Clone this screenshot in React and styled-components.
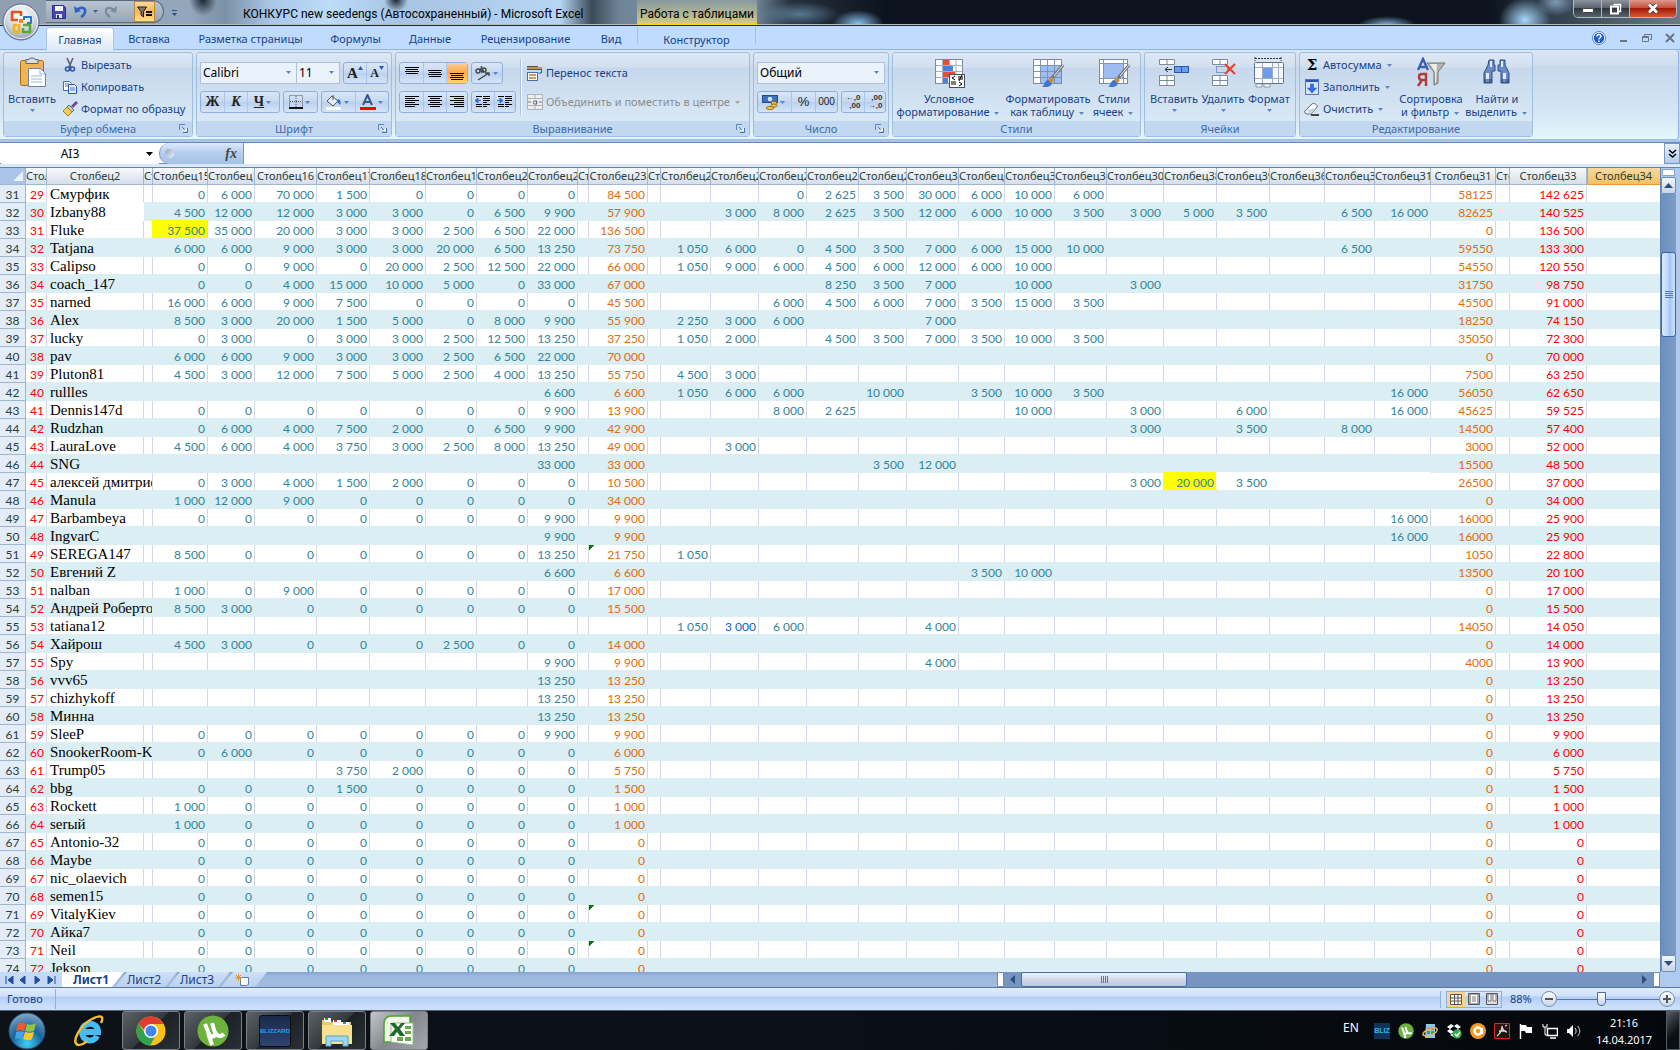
import React from "react";
import styled, { createGlobalStyle, css } from "styled-components";

const GlobalStyle = createGlobalStyle`
  * { box-sizing: border-box; }
  body { margin: 0; overflow: hidden; background: #0b0f14; }
  button, input, select { font: inherit; color: inherit; margin: 0; }
  button { padding: 0; border: 0; background: none; cursor: default; white-space: nowrap; }
  svg { display: block; flex: none; }
`;

// column widths, the last one takes what is left
const COLS = [
  26, 21, 97, 9, 55, 47, 62, 53, 56, 51, 51, 50, 11, 59, 13, 50, 48, 48, 52, 48,
  52, 46, 50, 52, 57, 53, 53, 55, 50, 56, 65, 14, 77,
];

const HEADERS = [
  "Столбец1", "Столбец2", "Столбец3", "Столбец15", "Столбец14", "Столбец16",
  "Столбец17", "Столбец18", "Столбец19", "Столбец20", "Столбец21", "Столбец22",
  "Столбец23", "Столбец24", "Столбец25", "Столбец26", "Столбец27", "Столбец28",
  "Столбец29", "Столбец30", "Столбец35", "Столбец36", "Столбец37", "Столбец30",
  "Столбец38", "Столбец39", "Столбец36", "Столбец32", "Столбец312", "Столбец31",
  "Столбец32", "Столбец33", "Столбец34",
];

const Z = [0, 0, 0, 0, 0, 0, 0, 0];
const last = (n) => ["", "", "", "", "", "", "", n];
const zeros = (n) => [0, 0, 0, 0, 0, 0, 0, n];

// name, first block, sum, second block by position, sum, total
const ROWS = [
  ["Смурфик", [0, 6000, 70000, 1500, 0, 0, 0, 0], 84500, { 3: 0, 4: 2625, 5: 3500, 6: 30000, 7: 6000, 8: 10000, 9: 6000 }, 58125, 142625],
  ["Izbany88", [4500, 12000, 12000, 3000, 3000, 0, 6500, 9900], 57900, { 2: 3000, 3: 8000, 4: 2625, 5: 3500, 6: 12000, 7: 6000, 8: 10000, 9: 3500, 10: 3000, 11: 5000, 12: 3500, 14: 6500, 15: 16000 }, 82625, 140525],
  ["Fluke", [37500, 35000, 20000, 3000, 3000, 2500, 6500, 22000], 136500, {}, 0, 136500],
  ["Tatjana", [6000, 6000, 9000, 3000, 3000, 20000, 6500, 13250], 73750, { 1: 1050, 2: 6000, 3: 0, 4: 4500, 5: 3500, 6: 7000, 7: 6000, 8: 15000, 9: 10000, 14: 6500 }, 59550, 133300],
  ["Calipso", [0, 0, 9000, 0, 20000, 2500, 12500, 22000], 66000, { 1: 1050, 2: 9000, 3: 6000, 4: 4500, 5: 6000, 6: 12000, 7: 6000, 8: 10000 }, 54550, 120550],
  ["coach_147", [0, 0, 4000, 15000, 10000, 5000, 0, 33000], 67000, { 4: 8250, 5: 3500, 6: 7000, 8: 10000, 10: 3000 }, 31750, 98750],
  ["narned", [16000, 6000, 9000, 7500, 0, 0, 0, 0], 45500, { 3: 6000, 4: 4500, 5: 6000, 6: 7000, 7: 3500, 8: 15000, 9: 3500 }, 45500, 91000],
  ["Alex", [8500, 3000, 20000, 1500, 5000, 0, 8000, 9900], 55900, { 1: 2250, 2: 3000, 3: 6000, 6: 7000 }, 18250, 74150],
  ["lucky", [0, 3000, 0, 3000, 3000, 2500, 12500, 13250], 37250, { 1: 1050, 2: 2000, 4: 4500, 5: 3500, 6: 7000, 7: 3500, 8: 10000, 9: 3500 }, 35050, 72300],
  ["pav", [6000, 6000, 9000, 3000, 3000, 2500, 6500, 22000], 70000, {}, 0, 70000],
  ["Pluton81", [4500, 3000, 12000, 7500, 5000, 2500, 4000, 13250], 55750, { 1: 4500, 2: 3000 }, 7500, 63250],
  ["rullles", last(6600), 6600, { 1: 1050, 2: 6000, 3: 6000, 5: 10000, 7: 3500, 8: 10000, 9: 3500, 15: 16000 }, 56050, 62650],
  ["Dennis147d", zeros(9900), 13900, { 3: 8000, 4: 2625, 8: 10000, 10: 3000, 12: 6000, 15: 16000 }, 45625, 59525],
  ["Rudzhan", [0, 6000, 4000, 7500, 2000, 0, 6500, 9900], 42900, { 10: 3000, 12: 3500, 14: 8000 }, 14500, 57400],
  ["LauraLove", [4500, 6000, 4000, 3750, 3000, 2500, 8000, 13250], 49000, { 2: 3000 }, 3000, 52000],
  ["SNG", last(33000), 33000, { 5: 3500, 6: 12000 }, 15500, 48500],
  ["алексей дмитриев", [0, 3000, 4000, 1500, 2000, 0, 0, 0], 10500, { 10: 3000, 11: 20000, 12: 3500 }, 26500, 37000],
  ["Manula", [1000, 12000, 9000, 0, 0, 0, 0, 0], 34000, {}, 0, 34000],
  ["Barbambeya", zeros(9900), 9900, { 15: 16000 }, 16000, 25900],
  ["IngvarC", last(9900), 9900, { 15: 16000 }, 16000, 25900],
  ["SEREGA147", [8500, 0, 0, 0, 0, 0, 0, 13250], 21750, { 1: 1050 }, 1050, 22800],
  ["Евгений Z", last(6600), 6600, { 7: 3500, 8: 10000 }, 13500, 20100],
  ["nalban", [1000, 0, 9000, 0, 0, 0, 0, 0], 17000, {}, 0, 17000],
  ["Андрей Робертович", [8500, 3000, 0, 0, 0, 0, 0, 0], 15500, {}, 0, 15500],
  ["tatiana12", last(""), "", { 1: 1050, 2: 3000, 3: 6000, 6: 4000 }, 14050, 14050],
  ["Хайрош", [4500, 3000, 0, 0, 0, 2500, 0, 0], 14000, {}, 0, 14000],
  ["Spy", last(9900), 9900, { 6: 4000 }, 4000, 13900],
  ["vvv65", last(13250), 13250, {}, 0, 13250],
  ["chizhykoff", last(13250), 13250, {}, 0, 13250],
  ["Минна", last(13250), 13250, {}, 0, 13250],
  ["SleeP", zeros(9900), 9900, {}, 0, 9900],
  ["SnookerRoom-Kiev", [0, 6000, 0, 0, 0, 0, 0, 0], 6000, {}, 0, 6000],
  ["Trump05", ["", "", "", 3750, 2000, 0, 0, 0], 5750, {}, 0, 5750],
  ["bbg", [0, 0, 0, 1500, 0, 0, 0, 0], 1500, {}, 0, 1500],
  ["Rockett", [1000, 0, 0, 0, 0, 0, 0, 0], 1000, {}, 0, 1000],
  ["serый", [1000, 0, 0, 0, 0, 0, 0, 0], 1000, {}, 0, 1000],
  ["Antonio-32", Z, 0, {}, 0, 0],
  ["Maybe", Z, 0, {}, 0, 0],
  ["nic_olaevich", Z, 0, {}, 0, 0],
  ["semen15", Z, 0, {}, 0, 0],
  ["VitalyKiev", Z, 0, {}, 0, 0],
  ["Айка7", Z, 0, {}, 0, 0],
  ["Neil", Z, 0, {}, 0, 0],
  ["Jekson", Z, 0, {}, 0, 0],
];

const LONG_NAMES = [47, 54, 62];
const FLAGGED = [51, 71, 73];

const fmt = (n) => (n === "" || n === undefined ? "" : String(n).replace(/\B(?=(\d{3})+$)/g, " "));

export default function App() {
  return (
    <Screen>
      <GlobalStyle />
      <TitleBar />
      <TabStrip />
      <Ribbon />
      <FormulaRow />
      <Sheet />
      <BottomBar />
      <StatusBar />
      <TaskBar />
    </Screen>
  );
}

/* ---------- title ---------- */

function TitleBar() {
  return (
    <Title>
      <OfficeButton aria-label="Office">
        <svg width="40" height="40" viewBox="0 0 40 40">
          <defs>
            <radialGradient id="orb" cx="50%" cy="30%" r="75%">
              <stop offset="0" stopColor="#ffffff" />
              <stop offset=".55" stopColor="#d3d9e2" />
              <stop offset="1" stopColor="#8391a6" />
            </radialGradient>
          </defs>
          <circle cx="20" cy="20" r="18" fill="url(#orb)" stroke="#5d6f8a" />
          <circle cx="20" cy="20" r="16.5" fill="none" stroke="#fff" opacity=".8" />
          <g fill="none" strokeWidth="2.6" strokeLinejoin="round">
            <path d="M17 18h-6v-8h9v4" stroke="#e8541d" />
            <path d="M23 18v-3h7v6h-4" stroke="#2a78c8" strokeWidth="2" />
            <path d="M18 22v8h-5v-7h3" stroke="#f5b312" />
            <path d="M22 23h7v7h-7v-4" stroke="#5ba83a" />
          </g>
          <rect x="18" y="17" width="4" height="4" fill="#f08a1c" />
        </svg>
      </OfficeButton>
      <QuickBar>
        <button aria-label="Сохранить">
          <svg width="14" height="14" viewBox="0 0 14 14"><path d="M.5.5h11l2 2v11H.5z" fill="#4747b5" stroke="#2c2c86" /><path d="M3 1h8v5H3z" fill="#f3f6ff" /><path d="M4 9h6v4H4z" fill="#dfe3f4" /><path d="M5 10h2v3H5z" fill="#333" /></svg>
        </button>
        <button aria-label="Отменить">
          <svg width="13" height="13" viewBox="0 0 13 13"><path d="M3 5c4-4 9-2 8 2-.4 2.400-2 4-4 5" fill="none" stroke="#2c62c9" strokeWidth="2.500" /><path d="M0 1l1 7 6-2z" fill="#2c62c9" /></svg>
        </button>
        <Caret $color="#3a5f9e" />
        <button aria-label="Вернуть">
          <svg width="13" height="13" viewBox="0 0 13 13"><path d="M10 5C6 1 1 3 2 7c.4 2.400 2 4 4 5" fill="none" stroke="#7d899a" strokeWidth="2" /><path d="M13 1l-1 7-6-2z" fill="#7d899a" /></svg>
        </button>
        <Caret $color="#c2b8a6" />
        <FilterButton aria-label="Фильтр">
          <svg width="16" height="14" viewBox="0 0 16 14"><path d="M.5 2h9L6.500 6.500V12L4 10V6.500z" fill="#777" stroke="#222" /><path d="M9 7h6M9 10h6" stroke="#111" strokeWidth="2" /></svg>
        </FilterButton>
      </QuickBar>
      <MoreButton aria-label="Настройка панели"><i /><Caret $color="#274e86" /></MoreButton>
      <Caption>КОНКУРС new seedengs (Автосохраненный) - Microsoft Excel</Caption>
      <ContextTitle>Работа с таблицами</ContextTitle>
      <WindowButtons>
        <button aria-label="Свернуть"><svg width="12" height="8" viewBox="0 0 12 8"><rect x=".5" y="3.500" width="11" height="4" rx="1" fill="#fff" stroke="#444" /></svg></button>
        <button aria-label="Развернуть"><svg width="13" height="12" viewBox="0 0 13 12"><path d="M4.500 1.500h7v7h-2" fill="none" stroke="#fff" strokeWidth="1.500" /><rect x="2" y="3.500" width="7" height="7" fill="none" stroke="#fff" strokeWidth="2" /></svg></button>
        <CloseButton aria-label="Закрыть"><svg width="12" height="11" viewBox="0 0 12 11"><path d="M2 1.500l8 8M10 1.500l-8 8" stroke="#444" strokeWidth="4" /><path d="M2 1.500l8 8M10 1.500l-8 8" stroke="#fff" strokeWidth="2.600" /></svg></CloseButton>
      </WindowButtons>
    </Title>
  );
}

function TabStrip() {
  return (
    <Tabs>
      <Tab $w={68} $active>Главная</Tab>
      <Tab $w={70}>Вставка</Tab>
      <Tab $w={133}>Разметка страницы</Tab>
      <Tab $w={77}>Формулы</Tab>
      <Tab $w={72}>Данные</Tab>
      <Tab $w={119}>Рецензирование</Tab>
      <Tab $w={52}>Вид</Tab>
      <Tab $w={119} $context>Конструктор</Tab>
      <TabTools>
        <button aria-label="Справка">
          <svg width="14" height="14" viewBox="0 0 14 14"><circle cx="7" cy="7" r="6.500" fill="#fff" stroke="#5b84c4" /><circle cx="7" cy="7" r="5.200" fill="#1e5fd0" /><path d="M5 5.500C5 3 9 3 9 5.300 9 6.800 7 6.800 7 8.500M7 9.500V11" stroke="#fff" strokeWidth="1.500" fill="none" /></svg>
        </button>
        <button aria-label="Свернуть окно"><svg width="10" height="10"><path d="M1 8h7" stroke="#6b7480" strokeWidth="2" /></svg></button>
        <button aria-label="Восстановить окно"><svg width="10" height="10"><path d="M2.500 3V1.500h7v5H8M.5 3.500h6v5h-6zM.5 4.500h6" stroke="#6b7480" fill="none" /></svg></button>
        <button aria-label="Закрыть окно"><svg width="10" height="10"><path d="M1 1l8 8M9 1l-8 8" stroke="#6b7480" strokeWidth="2" /></svg></button>
      </TabTools>
    </Tabs>
  );
}

/* ---------- ribbon ---------- */

function Group({ title, width, launcher, inset, children }) {
  return (
    <GroupBox $w={width}>
      <GroupBody $inset={inset}>{children}</GroupBody>
      <GroupLabel>
        <span>{title}</span>
        {launcher && (
          <button aria-label={title + ": параметры"}>
            <svg width="9" height="9" viewBox="0 0 9 9"><path d="M.5 6V.5H6" fill="none" stroke="#5f86b8" /><path d="M3 3l3 3M8.500 4v4.500H4" stroke="#456fa8" fill="none" /><path d="M4 7h4V4z" fill="#fff" /></svg>
          </button>
        )}
      </GroupLabel>
    </GroupBox>
  );
}

function Ribbon() {
  return (
    <RibbonBar>
      <Group title="Буфер обмена" width={190} launcher>
        <BigButton $w={56}>
          <PasteIcon />
          <span>Вставить</span>
          <Caret />
        </BigButton>
        <Stack>
          <SmallButton><svg width="16" height="16" viewBox="0 0 16 16"><path d="M5 1l4 9M11 1L7 10" stroke="#56616f" strokeWidth="1.600" /><circle cx="5.500" cy="12" r="2" fill="none" stroke="#2c55b0" strokeWidth="1.600" /><circle cx="10.500" cy="12" r="2" fill="none" stroke="#2c55b0" strokeWidth="1.600" /></svg>Вырезать</SmallButton>
          <SmallButton><svg width="16" height="16" viewBox="0 0 16 16"><path d="M1.500 2.500h6l2 2v7h-8z" fill="#fff" stroke="#4a6ea8" /><path d="M6.500 5.500h6l2 2v7h-8z" fill="#e8f0ff" stroke="#2c55b0" /><path d="M8 9h5M8 11h5M3 5h4M3 7h3" stroke="#4a7bd0" /></svg>Копировать</SmallButton>
          <SmallButton><svg width="16" height="16" viewBox="0 0 16 16"><path d="M15 1l-5 5" stroke="#6b4f9a" strokeWidth="3" /><path d="M7 4l5 5-2 2-5-5z" fill="#c9ccd2" stroke="#666" /><path d="M5 6l5 5-4 4-5-5z" fill="#f0cf55" stroke="#a67c1a" /></svg>Формат по образцу</SmallButton>
        </Stack>
      </Group>

      <Group title="Шрифт" width={196} launcher>
        <FontGrid>
          <Line>
            <Picker label="Шрифт" width={97} value="Calibri" />
            <Picker label="Размер" width={43} value="11" />
            <Segment $ml={3}>
              <ToolButton $w={22} aria-label="Увеличить размер"><Glyph $size={15}>A</Glyph><Tiny viewBox="0 0 5 4"><path d="M0 4l2.500-4L5 4z" fill="#2c55b0" /></Tiny></ToolButton>
              <ToolButton $w={21} aria-label="Уменьшить размер"><Glyph $size={12}>A</Glyph><Tiny viewBox="0 0 5 4"><path d="M0 0l2.500 4L5 0z" fill="#2c55b0" /></Tiny></ToolButton>
            </Segment>
          </Line>
          <Line>
            <Segment>
              <ToolButton $w={23}><Glyph $size={14}>Ж</Glyph></ToolButton>
              <ToolButton $w={23}><Glyph $size={14} $italic>К</Glyph></ToolButton>
              <ToolButton $w={32}><Glyph $size={14} $underline>Ч</Glyph><Caret /></ToolButton>
            </Segment>
            <Segment $ml={3}>
              <ToolButton $w={33} aria-label="Границы"><svg width="14" height="14" viewBox="0 0 14 14"><path d="M.5.5h13v12H.5zM7 1v12M1 6.500h12" fill="none" stroke="#555" strokeDasharray="1 1" /><path d="M0 13h14" stroke="#111" strokeWidth="2" /></svg><Caret /></ToolButton>
            </Segment>
            <Segment $ml={3}>
              <ToolButton $w={33} aria-label="Заливка"><svg width="16" height="16" viewBox="0 0 16 16"><path d="M6 2l6 5-5 5-6-5z" fill="#e8edf5" stroke="#555" /><path d="M7 6V1" stroke="#555" /><path d="M12 5c3 1 3 3 2 6-1-2-3-2-3-4z" fill="#2c6fd0" /><rect y="13" width="15" height="3" fill="#fff" /></svg><Caret /></ToolButton>
              <ToolButton $w={33} aria-label="Цвет текста"><svg width="16" height="16" viewBox="0 0 16 16"><path d="M3 11L7.500 1 12 11M5 8h5" stroke="#34578f" strokeWidth="2" fill="none" /><rect y="13" width="16" height="3" fill="#f00" /></svg><Caret /></ToolButton>
            </Segment>
          </Line>
        </FontGrid>
      </Group>

      <Group title="Выравнивание" width={355} launcher>
        <FontGrid>
          <Line>
            <Segment>
              <ToolButton $w={23} aria-label="По верхнему краю"><Bars y={2} /></ToolButton>
              <ToolButton $w={23} aria-label="По середине"><Bars y={5} /></ToolButton>
              <ToolButton $w={21} $on aria-label="По нижнему краю"><Bars y={8} /></ToolButton>
            </Segment>
            <Segment $ml={3}>
              <ToolButton $w={30} aria-label="Ориентация"><svg width="17" height="16" viewBox="0 0 17 16"><g fill="none" stroke="#444" strokeWidth="1.400"><circle cx="4" cy="6" r="2" /><path d="M6 3l2 5M7 1l3 6" /><circle cx="10" cy="5" r="2" /><path d="M4 15L15 8M11 8h4v3" /></g></svg><Caret /></ToolButton>
            </Segment>
          </Line>
          <Line>
            <Segment>
              <ToolButton $w={23} aria-label="Слева"><AlignBars side="start" /></ToolButton>
              <ToolButton $w={23} aria-label="По центру"><AlignBars side="middle" /></ToolButton>
              <ToolButton $w={21} aria-label="Справа"><AlignBars side="end" /></ToolButton>
            </Segment>
            <Segment $ml={3}>
              <ToolButton $w={22} aria-label="Уменьшить отступ"><Indent /></ToolButton>
              <ToolButton $w={21} aria-label="Увеличить отступ"><Indent right /></ToolButton>
            </Segment>
          </Line>
        </FontGrid>
        <Divider />
        <WrapColumn>
          <SmallButton><svg width="16" height="16" viewBox="0 0 16 16"><path d="M0 1.500h11M0 4.500h15" stroke="#555" /><path d="M0 3h15" stroke="#c27b2a" strokeWidth="1.500" /><path d="M14.500 4v4h-3" stroke="#2c55b0" fill="none" /><rect x=".5" y="7.500" width="10" height="8" fill="#fff" stroke="#4a6ea8" /><path d="M2 10h7M2 13h7" stroke="#c27b2a" strokeWidth="1.500" /></svg>Перенос текста</SmallButton>
          <SmallButton $off><svg width="16" height="16" viewBox="0 0 16 16"><path d="M.5.5h15v15H.5zM.5 4.500h15M.5 11.500h15M8 0v4M8 12v4" fill="#eee" stroke="#aab2bd" /><path d="M1 8h3M12 8h3" stroke="#777" /><circle cx="8" cy="8.500" r="1.700" fill="none" stroke="#666" /><path d="M9.700 6.500v4" stroke="#666" /></svg>Объединить и поместить в центре<Caret $color="#a9a39a" /></SmallButton>
        </WrapColumn>
      </Group>

      <Group title="Число" width={136} launcher>
        <FontGrid>
          <Line><Picker label="Формат числа" width={128} value="Общий" /></Line>
          <Line>
            <Segment>
              <ToolButton $w={33} aria-label="Финансовый формат"><svg width="16" height="16" viewBox="0 0 16 16"><rect x=".5" y="1.500" width="15" height="7" fill="#3e6fc0" stroke="#224a90" /><circle cx="8" cy="5" r="2.300" fill="#d7e4f8" /><ellipse cx="12" cy="9" rx="3" ry="1.500" fill="#f5cf52" stroke="#9c6e12" /><ellipse cx="12" cy="11.500" rx="3" ry="1.500" fill="#f5cf52" stroke="#9c6e12" /><ellipse cx="8" cy="14" rx="4" ry="1.500" fill="#f5cf52" stroke="#9c6e12" /></svg><Caret /></ToolButton>
              <ToolButton $w={24}><Figure $size={13}>%</Figure></ToolButton>
              <ToolButton $w={22}><Figure $size={10}>000</Figure></ToolButton>
            </Segment>
            <Segment $ml={3}>
              <ToolButton $w={22} aria-label="Увеличить разрядность"><Decimals top="←,0" bottom=",00" /></ToolButton>
              <ToolButton $w={21} aria-label="Уменьшить разрядность"><Decimals top=",00" bottom="→,0" /></ToolButton>
            </Segment>
          </Line>
        </FontGrid>
      </Group>

      <Group title="Стили" width={249}>
        <BigButton $w={112}><CondIcon /><span>Условное</span><span>форматирование <Caret /></span></BigButton>
        <BigButton $w={86}><TableIcon /><span>Форматировать</span><span>как таблицу <Caret /></span></BigButton>
        <BigButton $w={46}><TableIcon solid /><span>Стили</span><span>ячеек <Caret /></span></BigButton>
      </Group>

      <Group title="Ячейки" width={152} inset={2}>
        <BigButton $w={54}>
          <svg width="32" height="32" viewBox="0 0 32 32"><CellRows /><rect x="16.500" y="9.500" width="14" height="6" fill="#6f9be8" stroke="#2c55b0" /><path d="M23.500 10v6" stroke="#2c55b0" /><path d="M14 12.500H7M10 10l-3 2.500 3 2.500" stroke="#333" fill="none" /></svg>
          <span>Вставить</span><Caret />
        </BigButton>
        <BigButton $w={44}>
          <svg width="32" height="32" viewBox="0 0 32 32"><CellRows x={4} /><rect x="9.500" y="9.500" width="11" height="6" fill="none" stroke="#2c55b0" strokeDasharray="1 1" /><path d="M18 7l10 10M28 7L18 17" stroke="#ee3b24" strokeWidth="2" /></svg>
          <span>Удалить</span><Caret />
        </BigButton>
        <BigButton $w={48}>
          <svg width="32" height="32" viewBox="0 0 32 32"><path d="M2 1.500h26M2 0v4M28 0v4" stroke="#333" strokeDasharray="2 1" /><rect x="1.500" y="5.500" width="29" height="21" rx="1" fill="#f7f9fc" stroke="#5f7288" /><path d="M2 10.500h28M2 21.500h28M9.500 6v20M19.500 6v20M25.500 6v20" stroke="#9fb0c4" /><rect x="10" y="11" width="9" height="10" fill="#6f9be8" /><path d="M3 27h6v3H3zM11 27h6v3h-6z" fill="#fff" stroke="#8796a8" /></svg>
          <span>Формат</span><Caret />
        </BigButton>
      </Group>

      <Group title="Редактирование" width={234} inset={2}>
        <Stack $w={94}>
          <SmallButton><Sigma>Σ</Sigma>Автосумма<Caret /></SmallButton>
          <SmallButton><svg width="16" height="16" viewBox="0 0 16 16"><rect x="1.500" y=".5" width="13" height="15" fill="#d5e3fa" stroke="#5577ad" /><path d="M2 2h12" stroke="#2c55b0" strokeWidth="2" /><path d="M6.500 5h3v4h3L8 14 3.500 9h3z" fill="#2f6fe0" stroke="#1d4da8" strokeWidth=".5" /></svg>Заполнить<Caret /></SmallButton>
          <SmallButton><svg width="16" height="16" viewBox="0 0 16 16"><path d="M1 10l7-7c2-1.500 6 1 5 3l-6 7H3c-1.500 0-3-1.500-2-3z" fill="#fff" stroke="#56657a" /><path d="M2 9l5 4 5-6" fill="#c9d4e3" /><path d="M7 14h8" stroke="#111" strokeWidth="1.500" /></svg>Очистить<Caret /></SmallButton>
        </Stack>
        <BigButton $w={70}>
          <svg width="32" height="32" viewBox="0 0 32 32"><path d="M12 6h18l-7 9v11l-4 2V15z" fill="#b5b5b0" stroke="#73736e" /><path d="M15 7h7l-1 18-1 2V15z" fill="#ecebe6" /><g fill="none" strokeWidth="2.400"><path d="M3 13L8 2l5 11M5 10h6" stroke="#3a5fae" /><path d="M11 29V17H7c-4 0-4 6 0 6h4M7 23l-4 6" stroke="#b03a36" /></g></svg>
          <span>Сортировка</span><span>и фильтр <Caret /></span>
        </BigButton>
        <BigButton $w={62}>
          <svg width="32" height="32" viewBox="0 0 32 32"><g fill="#6b8cc8" stroke="#2e4a80"><path d="M8 3h5v5h1v6h-3v12H3V16l4-8z" /><path d="M19 3h5v5l4 8v10h-8V14h-3V8h2z" /></g><path d="M5 16h3v9H5zM22 16h3v9h-3zM9 4h2v6H9zM20 4h2v6h-2z" fill="#dfe9fa" /><path d="M3 22h8v4H3zM20 22h8v4h-8z" fill="#2e4a80" opacity=".6" /></svg>
          <span>Найти и</span><span>выделить <Caret /></span>
        </BigButton>
      </Group>
    </RibbonBar>
  );
}

function Caret({ $color = "#5a86c4" }) {
  return <CaretSvg viewBox="0 0 5 3"><path d="M0 0h5L2.500 3z" fill={$color} /></CaretSvg>;
}

function Picker({ label, width, value }) {
  return (
    <PickerBox $w={width}>
      <select aria-label={label} defaultValue={value}><option>{value}</option></select>
      <Caret />
    </PickerBox>
  );
}

function Bars({ y }) {
  return <svg width="16" height="16"><path d={`M1 ${y + 0.5}h14M2 ${y + 2.5}h12M1 ${y + 4.5}h14M2 ${y + 6.5}h12`} stroke="#000" /></svg>;
}

function AlignBars({ side }) {
  const x = { start: 1, middle: 3, end: 5 }[side];
  return <svg width="16" height="16"><path d={`M1 2.500h14M${x} 4.500h10M1 6.500h14M${x} 8.500h10M1 10.500h14M${x} 12.500h10`} stroke="#000" /></svg>;
}

function Indent({ right }) {
  return (
    <svg width="16" height="16">
      <path d="M1 2.500h6M8 2.500h7M8 4.500h7M8 6.500h7M8 8.500h4M1 10.500h6M8 10.500h7M1 12.500h6M8 12.500h4" stroke="#000" />
      <path d={right ? "M0 6.500h3M3 4l3 2.500L3 9z" : "M3 6.500h3M3 4L0 6.500 3 9z"} stroke="#2c6fd0" fill="#2c6fd0" />
    </svg>
  );
}

function Decimals({ top, bottom }) {
  return <DecimalBox><span>{top}</span><span>{bottom}</span></DecimalBox>;
}

function PasteIcon() {
  return (
    <svg width="32" height="32" viewBox="0 0 32 32">
      <rect x="4.500" y="3.500" width="23" height="25" rx="2" fill="#f0b54e" stroke="#a56b1c" />
      <path d="M10 2.500h3C13 .5 19 .5 19 2.500h3v4H10z" fill="#d8dce2" stroke="#5d6672" />
      <path d="M12.500 11.500h12l5 5v13h-17z" fill="#fff" stroke="#6d83a3" />
      <path d="M24 12v5h5M15 19h11M15 22h11M15 25h11" stroke="#9db4d4" fill="none" />
    </svg>
  );
}

function CondIcon() {
  return (
    <svg width="32" height="32" viewBox="0 0 32 32">
      <rect x="2.500" y="2.500" width="27" height="24" fill="#fff" stroke="#7b8ba0" />
      <path d="M3 8.500h26M3 14.500h26M3 20.500h26M9.500 3v23M16.500 3v23M23 3v23" stroke="#9fb0c4" />
      <path d="M10 3h6v5h-6zM10 15h12v5H10z" fill="#ee4b32" />
      <path d="M10 9h10v5H10zM10 21h5v5h-5z" fill="#4a7fe0" />
      <rect x="16.500" y="17.500" width="15" height="13" fill="#fff" stroke="#44505e" />
      <path d="M22 19l-3 2 3 2M18 25h5M18 27h5M25 20h5M25 22h5M29 18l-3 6M26 25l3 2-3 2" stroke="#000" fill="none" />
    </svg>
  );
}

function TableIcon({ solid }) {
  return (
    <svg width="32" height="32" viewBox="0 0 32 32">
      <rect x="1.500" y="2.500" width="28" height="24" fill="#fff" stroke="#7b8ba0" />
      <path d={solid ? "M6 7h19v14H6z" : "M9 9h20v17H9z"} fill="#9dbcf2" />
      <path d={solid ? "M2 6.500h27M2 21.500h27M5.500 3v23M25.500 3v23" : "M2 8.500h27M2 14.500h27M2 20.500h27M8.500 3v23M15.500 3v23M22.500 3v23"} stroke="#7f95b5" />
      <path d="M31 8L20 21" stroke="#777" strokeWidth="3" />
      <path d="M31 8l-9 11" stroke="#eee" />
      <path d="M18 20l4 3-3 4-4-2z" fill="#c98a35" />
      <path d="M16 23l4 4c-3 4-6 3-10 3 3-2 2-6 6-7z" fill="#3f74cf" />
    </svg>
  );
}

function CellRows({ x = 0 }) {
  return (
    <g fill="#fff" stroke="#7b8ba0">
      <path d={`M${x + 1.5} 2.500h15v5h-15zM${x + 9} 2.500v5`} />
      <path d={`M${x + 1.5} 18.500h15v10h-15zM${x + 9} 18.500v10M${x + 1.5} 23.500h15`} />
    </g>
  );
}

/* ---------- formula row and sheet ---------- */

function FormulaRow() {
  return (
    <FormulaBox>
      <NameBox aria-label="Имя" defaultValue="AI3" />
      <NameArrow aria-label="Список имён"><svg width="7" height="4"><path d="M0 0h7L3.500 4z" fill="#000" /></svg></NameArrow>
      <FxBox><i /><span>fx</span></FxBox>
      <FormulaInput aria-label="Строка формул" />
      <ExpandButton aria-label="Развернуть строку формул"><svg width="9" height="10"><path d="M1 1l3.500 3L8 1M1 5l3.500 3L8 5" fill="none" stroke="#000" strokeWidth="1.500" /></svg></ExpandButton>
    </FormulaBox>
  );
}

function cellProps(row, key) {
  if (row === 33 && key === "a0") return { $fill: "#ffff00" };
  if (row === 47 && key === "b11") return { $fill: "#ffff00", $bare: true };
  if (row === 47 && ["b12", "b13", "b14", "b15"].includes(key)) return { $fill: "#ffffff", $bare: true };
  if (row === 55 && key === "b2") return { $color: "#0066cc" };
  return {};
}

function Sheet() {
  return (
    <SheetArea>
      <GridClip>
        <Grid>
          <colgroup>
            {COLS.map((w, i) => <col key={i} width={w} />)}
            <col />
          </colgroup>
          <thead>
            <tr>
              <Corner><svg width="10" height="10"><path d="M10 0v10H0z" fill="#e8f0fa" /></svg></Corner>
              {HEADERS.map((h, i) => <ColHead key={i} $active={i === HEADERS.length - 1}>{h}</ColHead>)}
            </tr>
          </thead>
          <tbody>
            {ROWS.map(([name, first, sum, second, sum2, total], i) => {
              const n = i + 31;
              const long = LONG_NAMES.includes(n);
              return (
                <Row key={n} $band={i % 2 === 1}>
                  <RowHead $band={i % 2 === 1}>{n}</RowHead>
                  <Cell $color="#ff0000">{n - 2}</Cell>
                  <NameCell colSpan={long ? 2 : 1} $white={n === 32}>{name}</NameCell>
                  {!long && <Cell />}
                  {first.map((v, k) => <Cell key={k} {...cellProps(n, "a" + k)}>{fmt(v)}</Cell>)}
                  <Cell />
                  <Cell $color="#e46c0a" $flag={FLAGGED.includes(n)}>{fmt(sum)}</Cell>
                  <Cell />
                  {Array.from({ length: 15 }, (_, k) => (
                    <Cell key={k} {...cellProps(n, "b" + (k + 1))}>{fmt(second[k + 1])}</Cell>
                  ))}
                  <Cell $color="#e46c0a">{sum2}</Cell>
                  <Cell />
                  <Cell $color="#ff0000">{fmt(total)}</Cell>
                  <Cell $bare />
                </Row>
              );
            })}
          </tbody>
        </Grid>
      </GridClip>
      <VScroll>
        <Splitter />
        <ScrollButton aria-label="Вверх"><svg width="9" height="5"><path d="M0 5h9L4.500 0z" fill="#2d4f7f" /></svg></ScrollButton>
        <VTrack><VThumb><i /><i /><i /><i /></VThumb></VTrack>
        <ScrollButton aria-label="Вниз"><svg width="9" height="5"><path d="M0 0h9L4.500 5z" fill="#2d4f7f" /></svg></ScrollButton>
      </VScroll>
    </SheetArea>
  );
}

const navPaths = ["M1 0v8M8 0L3 4l5 4z", "M6 0L1 4l5 4z", "M2 0l5 4-5 4z", "M1 0l5 4-5 4zM8 0v8"];
const navNames = ["Первый лист", "Предыдущий лист", "Следующий лист", "Последний лист"];

function BottomBar() {
  return (
    <Bottom>
      <SheetNav>
        {navPaths.map((d, i) => (
          <button key={i} aria-label={navNames[i]}><svg width="9" height="8"><path d={d} fill="#1f4e98" stroke="#1f4e98" /></svg></button>
        ))}
      </SheetNav>
      <SheetTab $active><span>Лист1</span></SheetTab>
      <SheetTab><span>Лист2</span></SheetTab>
      <SheetTab><span>Лист3</span></SheetTab>
      <SheetTab aria-label="Вставить лист" $narrow>
        <svg width="14" height="12"><path d="M5.500 3.500h8v7l-2 1h-6z" fill="#fff" stroke="#5f7ba6" /><path d="M3.500 0v7M0 3.500h7M1 1l5 5M6 1L1 6" stroke="#e8962a" /></svg>
      </SheetTab>
      <Spacer />
      <HSplit />
      <HScroll>
        <button aria-label="Влево"><svg width="5" height="9"><path d="M5 0v9L0 4.500z" fill="#2d4f7f" /></svg></button>
        <HTrack><HThumb><i /><i /><i /><i /></HThumb></HTrack>
        <button aria-label="Вправо"><svg width="5" height="9"><path d="M0 0v9l5-4.500z" fill="#2d4f7f" /></svg></button>
      </HScroll>
      <HSplit />
      <BottomCorner />
    </Bottom>
  );
}

function StatusBar() {
  return (
    <Status>
      <Ready>Готово</Ready>
      <Spacer />
      <ViewButtons>
        <ViewButton $on aria-label="Обычный"><svg width="12" height="11"><path d="M.5.5h11v10H.5zM.5 4h11M.5 7h11M4.500 0v11M8 0v11" fill="#fff" stroke="#555" /></svg></ViewButton>
        <ViewButton aria-label="Разметка"><svg width="12" height="12"><path d="M.5.5h11v11H.5z" fill="#aaa" stroke="#555" /><path d="M3 2h6v8H3z" fill="#fff" /><path d="M4 4h4M4 6h4M4 8h4" stroke="#777" /></svg></ViewButton>
        <ViewButton aria-label="Страничный"><svg width="12" height="12"><path d="M.5.5h11v11H.5z" fill="#ddd" stroke="#555" /><path d="M2 1h3v7H2zM7 1h3v7H7z" fill="#fff" stroke="#777" /></svg></ViewButton>
      </ViewButtons>
      <Percent>88%</Percent>
      <ZoomButton aria-label="Уменьшить"><svg width="8" height="8"><path d="M0 4h8" stroke="#555" strokeWidth="2" /></svg></ZoomButton>
      <Zoom type="range" aria-label="Масштаб" min="0" max="100" defaultValue="43" />
      <ZoomButton aria-label="Увеличить"><svg width="8" height="8"><path d="M0 4h8M4 0v8" stroke="#555" strokeWidth="2" /></svg></ZoomButton>
    </Status>
  );
}

/* ---------- task bar ---------- */

function Mu({ size }) {
  return (
    <svg width={size} height={size} viewBox="0 0 32 32">
      <circle cx="16" cy="16" r="15.500" fill="#6cb33e" />
      <path d="M8 9l4 10c2 4 7 3 6-1l-3-10M18 17c2 5 6 5 9 2M11 18l4 12" stroke="#fff" strokeWidth="4" fill="none" />
    </svg>
  );
}

function TaskBar() {
  return (
    <Tasks>
      <StartButton aria-label="Пуск">
        <svg width="38" height="38" viewBox="0 0 38 38">
          <defs>
            <radialGradient id="start" cx="50%" cy="85%" r="85%">
              <stop offset="0" stopColor="#3fd0f8" />
              <stop offset=".5" stopColor="#1765a0" />
              <stop offset="1" stopColor="#86a9c4" />
            </radialGradient>
          </defs>
          <circle cx="19" cy="19" r="18" fill="url(#start)" stroke="#2a4a66" />
          <path d="M10 12c3-2 5-2 8 0l-2 7c-3-1-5-1-8 0z" fill="#f0592b" />
          <path d="M19 12c3 1 6 1 9-1l-2 8c-3 1-6 1-9 0z" fill="#8fc63e" />
          <path d="M8 20c3-1 5-1 8 0l-2 7c-3-1-5-1-7 0z" fill="#3fa4e8" />
          <path d="M17 20c3 1 6 1 9 0l-2 7c-3 2-6 1-9 0z" fill="#fbc926" />
        </svg>
      </StartButton>
      <TaskButton $plain aria-label="Internet Explorer">
        <svg width="32" height="32" viewBox="0 0 32 32">
          <path d="M9 17h16c0-11-16-11-16 0 0 10 12 11 15 4" fill="none" stroke="#46bdf2" strokeWidth="6" />
          <path d="M5 30C-3 28 8 9 19 4c10-5 12-2 9 4M5 30c4 0 7-2 9-4" fill="none" stroke="#f4c030" strokeWidth="2.400" />
        </svg>
      </TaskButton>
      <TaskButton aria-label="Chrome">
        <svg width="30" height="30" viewBox="0 0 30 30">
          <circle cx="15" cy="15" r="14.500" fill="#fbc116" />
          <path d="M2.500 7.500A14.500 14.500 0 0127.500 8H15l-6 7z" fill="#e33b2e" />
          <path d="M2.500 7.500A14.500 14.500 0 0014 29.500L20 19H10z" fill="#2fa24f" />
          <circle cx="15" cy="15" r="7" fill="#fff" /><circle cx="15" cy="15" r="5.500" fill="#4285f4" />
        </svg>
      </TaskButton>
      <TaskButton aria-label="uTorrent"><Mu size={32} /></TaskButton>
      <TaskButton aria-label="Battle.net"><Blizz>BLIZZARD</Blizz></TaskButton>
      <TaskButton aria-label="Проводник">
        <svg width="32" height="32" viewBox="0 0 32 32">
          <path d="M1 5h8l2 2h19v22H1z" fill="#ecca6a" /><path d="M3 3h7v4H3z" fill="#fff" /><path d="M4 3h3v2H4z" fill="#1b9e3a" /><path d="M12 5h8v5h-8z" fill="#fff" /><path d="M13 5h3v2h-3z" fill="#d33" /><path d="M20 7h8v4h-8z" fill="#fff" /><path d="M22 7h3v2h-3z" fill="#38c" />
          <path d="M1 10h30v19H1z" fill="#f7e08f" />
          <path d="M5 31V21h22v10h-5v-5H10v5z" fill="#9fd7f2" stroke="#5ba4cc" />
        </svg>
      </TaskButton>
      <TaskButton $on aria-label="Excel">
        <svg width="32" height="32" viewBox="0 0 32 32">
          <path d="M1 27V9c0-5 3-8 8-8h18v26z" fill="#eef7e8" stroke="#4ea32e" strokeWidth="1.500" />
          <path d="M8 8h22v22l-22-3z" fill="#fff" stroke="#9ab88d" />
          <path d="M7 8h5l3 4 3-4h4l-5 6 5 7h-5l-3-4-3 4H6l6-7z" fill="#1e6b2a" />
          <path d="M22 11h6v3h-6zM22 16h6v3h-6zM14 22h6v4h-6zM22 22h6v4h-6z" fill="#69a94c" />
        </svg>
      </TaskButton>
      <Spacer />
      <Lang>EN</Lang>
      <Tray>
        <MiniBlizz>BLIZ</MiniBlizz>
        <Mu size={16} />
        <svg width="16" height="16" viewBox="0 0 16 16"><path d="M4 1h9v14H3z" fill="#8cc8f0" /><path d="M5 5l3-1v3H5zM9 4h3v3H9z" fill="#f0702c" /><path d="M5 8h3v3H5zM9 8h3v3H9z" fill="#4c9e38" /><path d="M1 12C0 8 14 2 15 6s-9 9-14 6" fill="none" stroke="#e8b848" strokeWidth="1.500" /></svg>
        <svg width="16" height="16" viewBox="0 0 16 16"><path d="M5 1l3 2-4 3-3-2zM11 1L8 3l4 3 3-2zM1 8l3-2 4 3-3 2zM15 8l-3-2-4 3 3 2zM4 12l4-2 3 2-3 2z" fill="#fff" /><circle cx="11" cy="11" r="4.500" fill="#33b04a" /><path d="M9 11l2 2 3-4" stroke="#fff" fill="none" strokeWidth="1.500" /></svg>
        <svg width="16" height="16" viewBox="0 0 16 16"><circle cx="8" cy="8" r="8" fill="#f59a1f" /><circle cx="8" cy="8" r="3.500" fill="none" stroke="#fff" strokeWidth="2.400" /><path d="M12 5v6" stroke="#fff" strokeWidth="2" /></svg>
        <svg width="16" height="16" viewBox="0 0 16 16"><path d="M.5.5h15v15H.5z" fill="#2a1210" stroke="#d8281e" /><path d="M3 13c4-3 5-6 5-10M8 4c1 3 3 5 5 5M5 8h7M11 3l2-1" stroke="#ddd" fill="none" strokeWidth="1.300" /></svg>
        <svg width="16" height="16" viewBox="0 0 16 16"><path d="M2.500 1v15" stroke="#fff" strokeWidth="1.500" /><path d="M3 2h5l1 2h5v6H8L7 8H3z" fill="#fff" /></svg>
        <svg width="16" height="16" viewBox="0 0 16 16"><path d="M5.500 5.500h10v7h-10zM8 15h6" stroke="#fff" strokeWidth="1.500" fill="none" /><path d="M1 1v3h4V1M3 4v8h2" stroke="#fff" fill="none" /></svg>
        <svg width="16" height="16" viewBox="0 0 16 16"><path d="M1 6h2l4-4v12l-4-4H1z" fill="#fff" /><path d="M9 5c1.500 2 1.500 4 0 6M11.500 3c3 3 3 7 0 10" stroke="#ddd" fill="none" /></svg>
      </Tray>
      <Clock><span>21:16</span><span>14.04.2017</span></Clock>
      <ShowDesktop aria-label="Показать рабочий стол" />
    </Tasks>
  );
}

/* ---------- styles ---------- */

const Screen = styled.div`
  display: flex;
  flex-direction: column;
  height: 100vh;
  overflow: hidden;
  background: #bfdbff;
  font: 11px/14px "Noto Sans", "Open Sans", sans-serif;
  color: #15428b;
`;

const Spacer = styled.div`flex: 1;`;

const CaretSvg = styled.svg`
  display: inline-block;
  width: 5px;
  height: 3px;
  margin: 0 2px;
  vertical-align: middle;
`;

const Title = styled.header`
  position: relative;
  display: flex;
  flex: none;
  height: 26px;
  padding-left: 46px;
  border-bottom: 1px solid #1d2a38;
  box-shadow: inset 0 -1px 0 #b8bcc0;
  background:
    radial-gradient(14px 16px at 203px 0, #1c2733, transparent),
    radial-gradient(12px 12px at 396px 0, #1c2733, transparent),
    radial-gradient(26px 14px at 858px 24px, #8cc4f0, transparent),
    radial-gradient(40px 12px at 800px 14px, rgba(110, 150, 180, 0.7), transparent),
    radial-gradient(30px 10px at 1387px 26px, #8fc4f2, transparent),
    radial-gradient(26px 22px at 1525px 20px, #a8d8fb, transparent),
    radial-gradient(20px 14px at 1556px 2px, #7f9ab5, transparent),
    linear-gradient(90deg, #8f9fb0 0, #93a6bb 190px, #7b91a6 225px, #a9c6e6 270px, #bcdcf8 330px, #a7c4e2 400px, #b6d6f4 560px, #3c4a58 592px, #6f8699 620px, #7c93a8 750px, #26323f 790px, #0c131c 885px, #0c131c 1490px, #2b3947 1540px, #6d7a86 100%);
`;

const OfficeButton = styled.button`
  position: absolute;
  z-index: 2;
  left: 1px;
  top: 2px;
`;

const QuickBar = styled.div`
  display: flex;
  align-items: center;
  gap: 4px;
  width: 118px;
  height: 23px;
  padding-left: 6px;
  border: 1px solid #5c6b7c;
  border-left: 0;
  border-radius: 0 12px 12px 0;
  background: linear-gradient(#b9c5d2, #97a6b6);
  svg { flex: none; }
  button:first-child { margin-right: 4px; }
`;

const FilterButton = styled.button`
  display: flex;
  align-items: center;
  justify-content: center;
  width: 21px;
  height: 21px;
  border: 1px solid #b98a3c;
  background: linear-gradient(#fcd9a0, #f9b552 50%, #ffe08c);
`;

const MoreButton = styled.button`
  display: flex;
  flex-direction: column;
  align-items: center;
  justify-content: center;
  gap: 2px;
  width: 21px;
  i { width: 5px; height: 1px; background: #274e86; }
`;

const Caption = styled.h1`
  margin: 0 0 0 58px;
  width: 394px;
  font: 400 12px/28px Roboto, "Noto Sans", sans-serif;
  color: #000;
  white-space: nowrap;
`;

const ContextTitle = styled.div`
  width: 120px;
  font: 12px/28px Roboto, "Noto Sans", sans-serif;
  text-align: center;
  white-space: nowrap;
  color: #000;
  border-bottom: 2px solid #f5d800;
  background: linear-gradient(rgba(150, 165, 160, 0.5), #cdc98a);
`;

const WindowButtons = styled.div`
  display: flex;
  margin-left: auto;
  margin-right: 3px;
  height: 18px;
  border: 1px solid #aeb9c6;
  border-top: 0;
  border-radius: 0 0 5px 5px;
  overflow: hidden;
  button {
    display: flex;
    align-items: center;
    justify-content: center;
    width: 28px;
    border-right: 1px solid #aeb9c6;
    background: linear-gradient(#8d939b, #5a626c 45%, #2e353e 50%, #59626d);
  }
`;

const CloseButton = styled.button`
  && {
    width: 46px;
    border: 0;
    background: linear-gradient(#dd9a8d, #c4533c 45%, #a31a06 50%, #d65a34);
  }
`;

const Tabs = styled.nav`
  display: flex;
  flex: none;
  height: 24px;
  padding: 1px 5px 0 46px;
  background: #bfdbff;
  border-bottom: 1px solid #8db2e3;
`;

const Tab = styled.button`
  flex: none;
  width: ${(p) => p.$w}px;
  height: 24px;
  ${(p) => p.$active && css`
    border: 1px solid #a9c4e8;
    border-bottom: 0;
    border-radius: 4px 4px 0 0;
    background: linear-gradient(#fff, #dde8f5);
  `}
  ${(p) => p.$context && css`
    height: 17px;
    padding-top: 6px;
    border-left: 1px solid #a3bfe4;
    border-right: 1px solid #a3bfe4;
  `}
`;

const TabTools = styled.div`
  display: flex;
  align-items: center;
  gap: 13px;
  margin-left: auto;
`;

const RibbonBar = styled.section`
  display: flex;
  flex: none;
  gap: 3px;
  height: 90px;
  margin-right: 1px;
  padding: 2px 3px 3px;
  border-right: 1px solid #8db2e3;
  border-bottom: 1px solid #9ebbe0;
  border-radius: 0 4px 4px 0;
  background: linear-gradient(#dbe6f4, #cfdded 15px, #c9d9ed 16px, #d6e6f6 65px, #e6f7fb);
`;

const GroupBox = styled.div`
  display: flex;
  flex: none;
  flex-direction: column;
  width: ${(p) => p.$w}px;
  height: 85px;
  border: 1px solid #9ebfdb;
  border-radius: 3px;
  background: linear-gradient(#dee8f5, #d1dfef 14px, #c7d8ed 15px, #d8e8f5 68px);
`;

const GroupBody = styled.div`
  display: flex;
  height: 68px;
  padding-left: ${(p) => p.$inset || 0}px;
`;

const GroupLabel = styled.div`
  position: relative;
  height: 15px;
  line-height: 16px;
  text-align: center;
  color: #3e6aaa;
  background: #c1d8f0;
  button { position: absolute; right: 4px; top: 3px; }
`;

const BigButton = styled.button`
  display: flex;
  flex: none;
  flex-direction: column;
  align-items: center;
  width: ${(p) => p.$w}px;
  padding-top: 4px;
  line-height: 13px;
  > svg:first-child { margin-bottom: 3px; }
  > svg:last-child { margin-top: 4px; }
`;

const Stack = styled.div`
  display: flex;
  flex-direction: column;
  width: ${(p) => (p.$w ? p.$w + "px" : "auto")};
  padding: 1px 0 0 2px;
`;

const SmallButton = styled.button`
  display: flex;
  align-items: center;
  gap: 3px;
  height: 22px;
  color: ${(p) => (p.$off ? "#8d8d8d" : "inherit")};
`;

const Sigma = styled.b`
  width: 16px;
  font: 700 15px/16px "DejaVu Serif", serif;
  color: #000;
`;

const FontGrid = styled.div`
  display: flex;
  flex-direction: column;
  gap: 7px;
  padding: 9px 0 0 3px;
`;

const Line = styled.div`
  display: flex;
  height: 22px;
`;

const Segment = styled.div`
  display: flex;
  margin-left: ${(p) => p.$ml || 0}px;
  border: 1px solid #8fb0dd;
  border-radius: 3px;
  background: linear-gradient(#d9e6f6, #c4d8f1 50%, #b9d0ee 51%, #d5e5f8);
  button + button { border-left: 1px solid #adc6e8; }
`;

const ToolButton = styled.button`
  display: flex;
  align-items: center;
  justify-content: center;
  width: ${(p) => p.$w}px;
  ${(p) => p.$on && css`background: linear-gradient(#fbd19b, #fba94c 45%, #ffd66c);`}
`;

const Glyph = styled.span`
  font: 700 ${(p) => p.$size}px/16px "Liberation Serif", serif;
  font-style: ${(p) => (p.$italic ? "italic" : "normal")};
  text-decoration: ${(p) => (p.$underline ? "underline" : "none")};
  color: #222;
`;

const Tiny = styled.svg`
  width: 5px;
  height: 4px;
  margin-bottom: 10px;
`;

const Figure = styled.span`
  font: ${(p) => p.$size}px/14px "Liberation Sans", sans-serif;
  color: #222;
`;

const DecimalBox = styled.span`
  display: flex;
  flex-direction: column;
  font: 700 8px/8px "Liberation Sans", sans-serif;
  text-align: right;
  color: #333;
`;

const PickerBox = styled.div`
  position: relative;
  width: ${(p) => p.$w}px;
  height: 22px;
  border: 1px solid #abc1de;
  background: #eaf2fb;
  & + & { border-left: 0; }
  select {
    width: 100%;
    height: 20px;
    padding: 0 14px 0 2px;
    border: 0;
    outline: 0;
    appearance: none;
    background: transparent;
    font-size: 12px;
    color: #000;
  }
  svg { position: absolute; right: 3px; top: 8px; }
`;

const Divider = styled.div`
  width: 1px;
  margin: 6px 5px 6px 5px;
  background: #f5faff;
  box-shadow: -1px 0 0 #a9c2e0;
`;

const WrapColumn = styled.div`
  display: flex;
  flex-direction: column;
  gap: 7px;
  padding-top: 9px;
`;

const FormulaBox = styled.div`
  display: flex;
  flex: none;
  height: 28px;
  padding: 3px 0 4px 1px;
  background: linear-gradient(#a9c6ea 0, #a9c6ea 2px, #5f85b8 2px, #6a8dbd 3px, #fff 3px, #fff 23px, #6f8fb8 23px, #6f8fb8 24px, #d5e3f5 24px, #e3edf9 27px, #5f85b8 27px);
`;

const NameBox = styled.input`
  width: 138px;
  min-width: 0;
  border: 0;
  padding: 0;
  background: #fff;
  text-align: center;
  font-size: 12px;
  color: #000;
`;

const NameArrow = styled.button`
  width: 20px;
  padding-left: 7px;
  background: #fff;
`;

const FxBox = styled.div`
  display: flex;
  align-items: center;
  justify-content: space-between;
  width: 85px;
  padding: 0 6px 0 5px;
  border-left: 1px solid #7a98c0;
  border-right: 1px solid #7a98c0;
  border-radius: 10px 0 0 10px;
  background: linear-gradient(#dbe8f9, #b4cdee 50%, #a6c2e8);
  i { width: 9px; height: 9px; border-radius: 50%; background: linear-gradient(135deg, #8fa3bf, #eef3fa); }
  span { font: italic 700 14px/20px "Liberation Serif", serif; color: #444; }
`;

const FormulaInput = styled.input`
  flex: 1;
  min-width: 0;
  border: 0;
  padding: 0 4px;
  background: #fff;
`;

const ExpandButton = styled.button`
  display: flex;
  align-items: center;
  justify-content: center;
  width: 16px;
  border: 1px solid #7a98c0;
  background: linear-gradient(#e8f1fc, #b3cbea);
`;

const SheetArea = styled.main`
  display: flex;
  flex: 1;
  min-height: 0;
`;

const GridClip = styled.div`
  flex: 1;
  min-width: 0;
  overflow: hidden;
  background: #fff;
`;

const Grid = styled.table`
  width: 100%;
  table-layout: fixed;
  border-collapse: separate;
  border-spacing: 0;
  font: 12px/15px Lato, "Noto Sans", sans-serif;
  td, th { padding: 0; overflow: hidden; white-space: nowrap; font-weight: 400; }
  tbody td, tbody th { padding-top: 2px; }
`;

const Corner = styled.td`
  height: 17px;
  border-right: 1px solid #9eb6ce;
  border-bottom: 1px solid #9eb6ce;
  background: #a9c4e9;
  svg { margin-left: 13px; }
`;

const ColHead = styled.th`
  height: 17px;
  font: 11px/16px "Noto Sans", sans-serif;
  text-align: center;
  color: #27413e;
  border-right: 1px solid #9eb6ce;
  border-bottom: 1px solid #9eb6ce;
  background: linear-gradient(#f8fafc, #d6deea);
  ${(p) => p.$active && css`
    border-color: #f29536;
    border-right: 0;
    box-shadow: inset 1px 0 0 #f29536;
    background: linear-gradient(#f9d99f, #f1c15f);
  `}
`;

const Row = styled.tr`
  height: ${(p) => (p.$band ? 19 : 17)}px;
  background: ${(p) => (p.$band ? "#daeef3" : "#ffffff")};
  td { border-right: 1px solid ${(p) => (p.$band ? "transparent" : "#d0d7e5")}; }
`;

const RowHead = styled.th`
  text-align: center;
  color: #27413e;
  background: #e4ecf7;
  border-right: 1px solid #9eb6ce;
  ${(p) => p.$band && css`
    border-top: 1px solid #9eb6ce;
    border-bottom: 1px solid #9eb6ce;
  `}
`;

const Cell = styled.td`
  text-align: right;
  color: ${(p) => p.$color || "#31859b"};
  && { padding-right: 2px; }
  ${(p) => p.$bare && css`&&& { border-right-color: transparent; }`}
  ${(p) => p.$fill && css`
    background: ${p.$fill};
    box-shadow: -1px -1px 0 ${p.$fill};
  `}
  ${(p) => p.$flag && css`
    background: linear-gradient(135deg, #008000 4px, transparent 4px);
  `}
`;

const NameCell = styled.td`
  && { padding-left: 3px; }
  font: 15px/15px "Liberation Serif", serif;
  color: #000;
  ${(p) => p.$white && css`background: #fff;`}
`;

const VScroll = styled.div`
  display: flex;
  flex: none;
  flex-direction: column;
  width: 20px;
  padding-right: 4px;
  background: #b0caee;
  border-left: 1px solid #5f85b8;
`;

const Splitter = styled.div`
  height: 7px;
  margin: 1px;
  border: 1px solid #8aa6cc;
  background: #fff;
`;

const ScrollButton = styled.button`
  display: flex;
  align-items: center;
  justify-content: center;
  height: 17px;
  border: 1px solid #6f8fb8;
  border-radius: 2px;
  background: linear-gradient(#f2f6fb, #c7d5e8);
`;

const VTrack = styled.div`
  flex: 1;
  padding-top: 58px;
  background: linear-gradient(90deg, #6d8fbc, #7d9cc8);
`;

const VThumb = styled.div`
  display: flex;
  flex-direction: column;
  align-items: center;
  justify-content: center;
  gap: 1px;
  height: 85px;
  border: 1px solid #3a66a8;
  border-radius: 3px;
  background: linear-gradient(90deg, #dceafc, #b9d4fa 50%, #9fc3f5 55%, #cfe2fd);
  i { width: 8px; height: 1px; background: #5f7ba6; }
`;

const Bottom = styled.div`
  display: flex;
  flex: none;
  height: 16px;
  border-bottom: 1px solid #5577a5;
  background: linear-gradient(#86a3cf, #9db8de 4px, #a3bce0);
`;

const SheetNav = styled.div`
  display: flex;
  align-items: center;
  gap: 5px;
  width: 62px;
  padding-left: 5px;
  background: #c3d9f5;
`;

const SheetTab = styled.button`
  display: flex;
  align-items: center;
  justify-content: center;
  width: ${(p) => (p.$narrow ? 46 : 62)}px;
  height: 15px;
  margin-right: -9px;
  padding-right: 4px;
  font-size: 12px;
  font-weight: ${(p) => (p.$active ? 700 : 400)};
  background: ${(p) => (p.$active ? "#ffffff" : "linear-gradient(#cfe0f7, #b9d0ef)")};
  clip-path: ${(p) => (p.$active ? "polygon(0 0, 100% 0, calc(100% - 12px) 100%, 0 100%)" : "polygon(12px 0, 100% 0, calc(100% - 12px) 100%, 0 100%)")};
`;

const HSplit = styled.div`
  width: 7px;
  height: 15px;
  border: 1px solid #6f8fb8;
  background: #fff;
`;

const HScroll = styled.div`
  display: flex;
  flex: 0 1 649px;
  align-items: center;
  gap: 6px;
  padding: 0 6px;
  background: #7695c1;
`;

const HTrack = styled.div`
  flex: 1;
  height: 15px;
`;

const HThumb = styled.div`
  display: flex;
  align-items: center;
  justify-content: center;
  gap: 1px;
  width: 166px;
  height: 15px;
  border: 1px solid #4a6ea0;
  border-radius: 2px;
  background: linear-gradient(#eef3fa, #cfdaea 50%, #b9c9df);
  i { width: 1px; height: 7px; background: #66788f; }
`;

const BottomCorner = styled.div`
  width: 20px;
  background: #b0caee;
`;

const Status = styled.footer`
  display: flex;
  flex: none;
  align-items: center;
  height: 22px;
  padding-right: 5px;
  background: linear-gradient(#dfecfd, #cfe1fb 8px, #b3cff5 9px, #cbdffb 19px, #c9dffc);
`;

const Ready = styled.span`
  width: 56px;
  padding-left: 7px;
  line-height: 20px;
  border-right: 1px solid #8fb0dd;
`;

const ViewButtons = styled.div`
  display: flex;
  height: 17px;
  margin-right: 8px;
  border: 1px solid #8fb0dd;
  box-shadow: -5px 0 0 #cfe1fb, -6px 0 0 #8fb0dd;
`;

const ViewButton = styled.button`
  display: flex;
  align-items: center;
  justify-content: center;
  width: 18px;
  background: ${(p) => (p.$on ? "linear-gradient(#fbd19b, #ffd66c)" : "transparent")};
`;

const Percent = styled.span`
  width: 31px;
`;

const ZoomButton = styled.button`
  display: flex;
  align-items: center;
  justify-content: center;
  width: 16px;
  height: 16px;
  border: 1px solid #6f8fb8;
  border-radius: 50%;
  background: linear-gradient(#fff, #c7d5e8);
`;

const Zoom = styled.input`
  width: 102px;
  height: 16px;
  appearance: none;
  background: linear-gradient(#5577a5, #5577a5) 0 8px / 100% 1px no-repeat;
  &::-webkit-slider-thumb {
    appearance: none;
    width: 9px;
    height: 14px;
    background: linear-gradient(#fff, #c7d5e8);
    border: 1px solid #4a6ea0;
    border-radius: 1px 1px 5px 5px;
  }
`;

const Tasks = styled.div`
  display: flex;
  flex: none;
  height: 40px;
  padding-left: 8px;
  border-top: 1px solid #59626c;
  background: linear-gradient(90deg, #0c1217, #0a0f18 50%, #04070b);
  color: #fff;
`;

const StartButton = styled.button`
  width: 52px;
`;

const TaskButton = styled.button`
  display: flex;
  align-items: center;
  justify-content: center;
  width: 58px;
  height: 39px;
  margin-right: 4px;
  border: 1px solid #7b8188;
  border-radius: 3px;
  background: ${(p) => (p.$on ? "linear-gradient(135deg, #c3c6c9, #84888c 50%, #a5a8ab)" : "linear-gradient(135deg, #5d6267, #33383d 49%, #1c2126 50%, #2a2f35)")};
  ${(p) => p.$plain && css`
    border-color: transparent;
    background: none;
  `}
`;

const Blizz = styled.span`
  display: flex;
  align-items: center;
  justify-content: center;
  width: 32px;
  height: 32px;
  overflow: hidden;
  border: 1px solid #0b0f14;
  border-radius: 3px;
  background: linear-gradient(#1a2a48, #2c4470);
  font: 700 6px/32px "Liberation Sans", sans-serif;
  color: #1ba5f0;
`;

const MiniBlizz = styled.span`
  width: 16px;
  height: 16px;
  overflow: hidden;
  background: #10315a;
  font: 700 7px/16px "Liberation Sans", sans-serif;
  text-align: center;
  color: #37b4f5;
`;

const Lang = styled.span`
  width: 31px;
  font-size: 12px;
  line-height: 34px;
`;

const Tray = styled.div`
  display: flex;
  align-items: center;
  gap: 8px;
`;

const Clock = styled.time`
  display: flex;
  flex-direction: column;
  justify-content: center;
  width: 84px;
  line-height: 17px;
  text-align: center;
`;

const ShowDesktop = styled.button`
  width: 14px;
  border: 1px solid #555d66;
  background: linear-gradient(135deg, #565c63, #0b0f14 60%);
`;
